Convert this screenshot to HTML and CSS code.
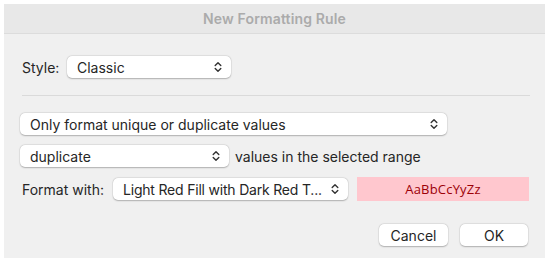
FILE: index.html
```html
<!DOCTYPE html>
<html lang="en">
<head>
  <meta charset="UTF-8">
  <title>New Formatting Rule</title>
  <link rel="stylesheet" href="styles.css">
</head>
<body>
  <div class="dialog">
    <div class="titlebar">New Formatting Rule</div>
    <div class="content">
      <div class="row style-row">
        <span class="label">Style:</span>
        <div class="select style-select">
          <span>Classic</span>
          <svg class="chev" viewBox="0 0 8 12"><path d="M1.2 4.5 L4 1.7 L6.8 4.5 M1.2 7.5 L4 10.3 L6.8 7.5" /></svg>
        </div>
      </div>

      <div class="separator"></div>

      <div class="row">
        <div class="select rule-select">
          <span>Only format unique or duplicate values</span>
          <svg class="chev" viewBox="0 0 8 12"><path d="M1.2 4.5 L4 1.7 L6.8 4.5 M1.2 7.5 L4 10.3 L6.8 7.5" /></svg>
        </div>
      </div>

      <div class="row dup-row">
        <div class="select dup-select">
          <span>duplicate</span>
          <svg class="chev" viewBox="0 0 8 12"><path d="M1.2 4.5 L4 1.7 L6.8 4.5 M1.2 7.5 L4 10.3 L6.8 7.5" /></svg>
        </div>
        <span class="label">values in the selected range</span>
      </div>

      <div class="row format-row">
        <span class="label">Format with:</span>
        <div class="select format-select">
          <span>Light Red Fill with Dark Red T...</span>
          <svg class="chev" viewBox="0 0 8 12"><path d="M1.2 4.5 L4 1.7 L6.8 4.5 M1.2 7.5 L4 10.3 L6.8 7.5" /></svg>
        </div>
        <div class="preview">AaBbCcYyZz</div>
      </div>

      <div class="buttons">
        <button class="btn">Cancel</button>
        <button class="btn">OK</button>
      </div>
    </div>
  </div>
</body>
</html>
```

FILE: styles.css
```css
body {
  margin: 0;
  background: #ffffff;
  font-family: Inter, 'Liberation Sans', Arial, sans-serif;
  font-size: 14px;
  color: #262626;
}

.dialog {
  margin: 4px 5px 0 4px;
  height: 254px;
  background: #f0f0f0;
  display: flex;
  flex-direction: column;
}

.titlebar {
  height: 29px;
  line-height: 29px;
  text-align: center;
  background: #e8e8e8;
  border-bottom: 1px solid #dcdcdc;
  color: #ababab;
  font-weight: 600;
  font-size: 14px;
  letter-spacing: 0.15px;
}

.content {
  padding: 22px 16px 0 16px;
  display: flex;
  flex-direction: column;
}

.row {
  display: flex;
  align-items: center;
}

.label {
  white-space: nowrap;
}

.style-row .label {
  margin-left: 2px;
  width: 45px;
}

.select {
  height: 22px;
  box-sizing: border-box;
  background: #ffffff;
  border-radius: 5px;
  box-shadow: 0 0.5px 1.5px rgba(0, 0, 0, 0.25), 0 0 0 0.5px rgba(0, 0, 0, 0.06);
  display: flex;
  align-items: center;
  justify-content: space-between;
  padding: 0 9px 0 10px;
  white-space: nowrap;
  overflow: hidden;
}

.chev {
  flex: none;
  width: 8px;
  height: 12px;
  fill: none;
  stroke: #333333;
  stroke-width: 1.4;
  stroke-linecap: round;
  stroke-linejoin: round;
}

.style-select {
  width: 164px;
}

.separator {
  height: 1px;
  background: #dadada;
  margin: 17px 0 17px 2px;
  width: 508px;
}

.rule-select {
  width: 427px;
}

.dup-row {
  margin-top: 10px;
  gap: 6px;
}

.dup-select {
  width: 209px;
}

.format-row {
  margin-top: 10px;
}

.format-row .label {
  margin-left: 2px;
  width: 91px;
}

.format-select {
  width: 235px;
}

.format-select span {
  letter-spacing: -0.2px;
}

.preview {
  margin-left: 9px;
  width: 172px;
  height: 24px;
  line-height: 24px;
  background: #ffc7ce;
  color: #9c0006;
  text-align: center;
  font-family: 'Open Sans', 'Liberation Sans', sans-serif;
  font-size: 13px;
  letter-spacing: 0.2px;
}

.buttons {
  display: flex;
  justify-content: flex-end;
  gap: 12px;
  margin-top: 23px;
  padding-right: 1px;
}

.btn {
  height: 22px;
  width: 69px;
  border: none;
  background: #ffffff;
  border-radius: 5px;
  box-shadow: 0 0.5px 1.5px rgba(0, 0, 0, 0.25), 0 0 0 0.5px rgba(0, 0, 0, 0.06);
  font-family: Inter, 'Liberation Sans', Arial, sans-serif;
  font-size: 14px;
  color: #262626;
  padding: 0;
}

.btn + .btn {
  width: 68px;
}
```
